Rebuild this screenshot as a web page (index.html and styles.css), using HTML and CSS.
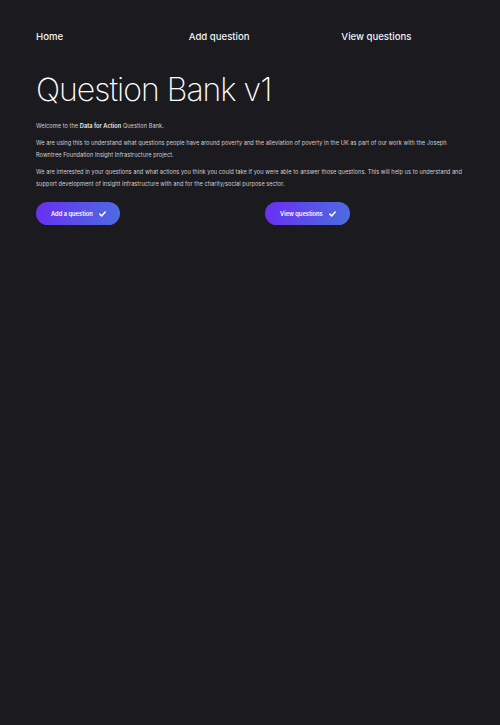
FILE: index.html
```html
<!DOCTYPE html>
<html lang="en">
<head>
<meta charset="utf-8">
<title>Question Bank v1</title>
<link rel="stylesheet" href="styles.css">
</head>
<body>
<div class="page">
  <nav class="nav">
    <a class="nav-link" href="#">Home</a>
    <a class="nav-link" href="#">Add question</a>
    <a class="nav-link" href="#">View questions</a>
  </nav>
  <h1 class="title">Question Bank v1</h1>
  <div class="intro">
    <p>Welcome to the <strong>Data for Action</strong> Question Bank.</p>
    <p>We are using this to understand what questions people have around poverty and the alleviation of poverty in the UK as part of our work with the Joseph Rowntree Foundation Insight Infrastructure project.</p>
    <p>We are interested in your questions and what actions you think you could take if you were able to answer those questions. This will help us to understand and support development of insight infrastructure with and for the charity/social purpose sector.</p>
  </div>
  <div class="actions">
    <div class="action"><a class="btn" href="#">Add a question <svg class="check" viewBox="0 0 10 8" width="7" height="6"><path d="M1.2 4.2 L3.8 6.8 L8.8 1.2" fill="none" stroke="#fff" stroke-width="2.2" stroke-linecap="round" stroke-linejoin="round"/></svg></a></div>
    <div class="action"><a class="btn" href="#">View questions <svg class="check" viewBox="0 0 10 8" width="7" height="6"><path d="M1.2 4.2 L3.8 6.8 L8.8 1.2" fill="none" stroke="#fff" stroke-width="2.2" stroke-linecap="round" stroke-linejoin="round"/></svg></a></div>
  </div>
</div>
</body>
</html>
```
FILE: styles.css
```css
html, body {
  margin: 0;
  padding: 0;
  background: #1b1a1f;
  min-height: 100%;
}
body {
  font-family: Inter, "Noto Sans", sans-serif;
  color: #e6e6ea;
}
.page {
  padding: 30px 36px 0 36px;
  width: 428px;
}
.nav {
  display: grid;
  grid-template-columns: repeat(3, 1fr);
  column-gap: 30px;
}
.nav-link {
  color: #f2f2f4;
  text-decoration: none;
  font-size: 9.6px;
  font-weight: 500;
  line-height: 14px;
}
.title {
  margin: 27px 0 0 0;
  font-size: 32px;
  font-weight: 200;
  line-height: 38px;
  color: #ffffff;
  letter-spacing: -1px;
}
.intro {
  margin-top: 11px;
}
.intro p {
  margin: 0 0 5px 0;
  font-size: 5.63px;
  line-height: 12px;
  color: #d0d0d5;
  letter-spacing: 0.05px;
}
.intro strong {
  font-weight: 600;
  color: #f0f0f2;
}
.actions {
  display: grid;
  grid-template-columns: 1fr 1fr;
  column-gap: 30px;
  margin-top: 12px;
}
.action {
  display: flex;
  align-items: flex-start;
}
.btn {
  display: flex;
  align-items: center;
  gap: 6px;
  height: 23px;
  padding: 0 14px 0 15px;
  border-radius: 12px;
  background: linear-gradient(100deg, #6a2ef2 0%, #4b6ee0 100%);
  color: #ffffff;
  text-decoration: none;
  font-size: 5.75px;
  font-weight: 600;
}
.check {
  display: block;
}
```
